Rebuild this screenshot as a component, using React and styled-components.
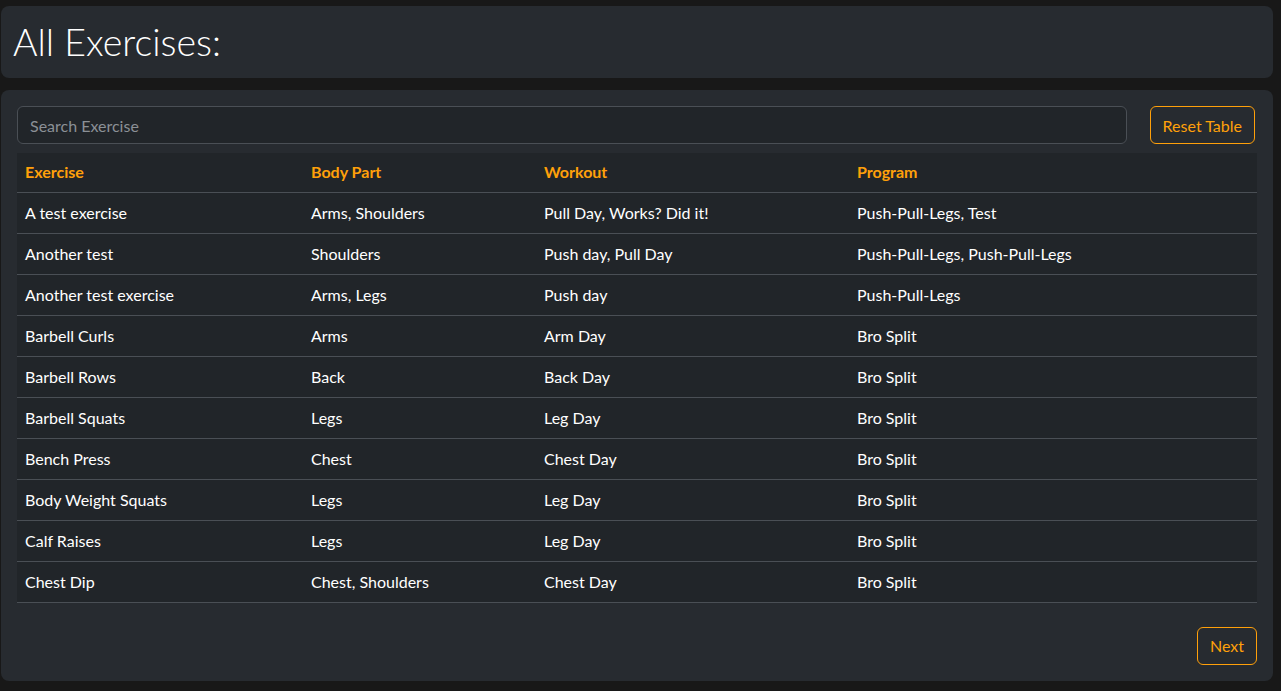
import React from "react";
import styled, { createGlobalStyle } from "styled-components";

const GlobalStyle = createGlobalStyle`
  html, body { margin: 0; padding: 0; background: #181818; }
  body { font-family: Lato, "Noto Sans", sans-serif; color: #fff; }
  * { box-sizing: border-box; }
`;

const Page = styled.div`
  display: flex;
  flex-direction: column;
  gap: 12px;
  padding: 6px 8px 10px 1px;
`;

const Card = styled.div`
  background: #272b30;
  border-radius: 8px;
  padding: ${(p) => p.$pad || "16px"};
`;

const Title = styled.h1`
  margin: 0;
  font-size: 37.5px;
  font-weight: 300;
  line-height: 48px;
  color: #fff;
`;

const Toolbar = styled.div`
  display: flex;
  align-items: center;
  gap: 23px;
  padding-right: 2px;
  margin-bottom: 9px;
`;

const Search = styled.input`
  flex: 1;
  height: 38px;
  background: #212529;
  border: 1px solid #4a4f55;
  border-radius: 6px;
  color: #fff;
  font-family: inherit;
  font-size: 16px;
  padding: 6px 12px;
  outline: none;
  &::placeholder { color: #8b9096; }
`;

const OutlineButton = styled.button`
  height: 38px;
  background: transparent;
  border: 1px solid #ffa00a;
  border-radius: 6px;
  color: #ffa00a;
  font-family: inherit;
  font-size: 16px;
  padding: 0 12px;
  cursor: pointer;
`;

const Table = styled.table`
  width: 100%;
  border-collapse: collapse;
  background: #212529;
  table-layout: fixed;
`;

const Th = styled.th`
  text-align: left;
  color: #ffa00a;
  font-weight: 700;
  font-size: 16px;
  height: 39px;
  padding: 0 8px 2px;
  border-bottom: 1px solid #4a4f55;
  width: ${(p) => p.$w};
`;

const Td = styled.td`
  font-size: 16px;
  height: 41px;
  padding: 0 8px;
  border-bottom: 1px solid #4a4f55;
  color: #fff;
`;

const Footer = styled.div`
  display: flex;
  justify-content: flex-end;
  margin-top: 24px;
`;

const rows = [
  ["A test exercise", "Arms, Shoulders", "Pull Day, Works? Did it!", "Push-Pull-Legs, Test"],
  ["Another test", "Shoulders", "Push day, Pull Day", "Push-Pull-Legs, Push-Pull-Legs"],
  ["Another test exercise", "Arms, Legs", "Push day", "Push-Pull-Legs"],
  ["Barbell Curls", "Arms", "Arm Day", "Bro Split"],
  ["Barbell Rows", "Back", "Back Day", "Bro Split"],
  ["Barbell Squats", "Legs", "Leg Day", "Bro Split"],
  ["Bench Press", "Chest", "Chest Day", "Bro Split"],
  ["Body Weight Squats", "Legs", "Leg Day", "Bro Split"],
  ["Calf Raises", "Legs", "Leg Day", "Bro Split"],
  ["Chest Dip", "Chest, Shoulders", "Chest Day", "Bro Split"],
];

export default function App() {
  return (
    <>
      <GlobalStyle />
      <Page>
        <Card $pad="12px 12px">
          <Title>All Exercises:</Title>
        </Card>
        <Card $pad="16px 16px 16px 16px">
          <Toolbar>
            <Search placeholder="Search Exercise" />
            <OutlineButton>Reset Table</OutlineButton>
          </Toolbar>
          <Table>
            <thead>
              <tr>
                <Th $w="286px">Exercise</Th>
                <Th $w="233px">Body Part</Th>
                <Th $w="313px">Workout</Th>
                <Th>Program</Th>
              </tr>
            </thead>
            <tbody>
              {rows.map((r) => (
                <tr key={r[0]}>
                  {r.map((c, i) => (
                    <Td key={i}>{c}</Td>
                  ))}
                </tr>
              ))}
            </tbody>
          </Table>
          <Footer>
            <OutlineButton>Next</OutlineButton>
          </Footer>
        </Card>
      </Page>
    </>
  );
}
